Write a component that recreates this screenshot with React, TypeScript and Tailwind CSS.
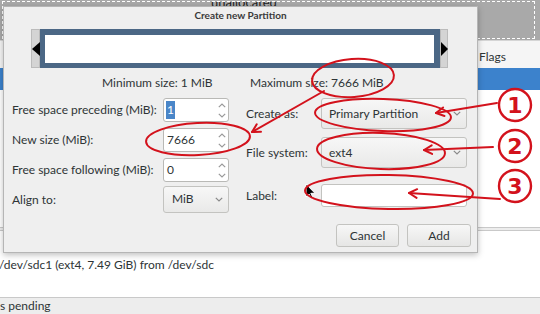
import React from "react";

const RED = "#d3121c";

function ChevronDown({ className = "" }: { className?: string }) {
  return (
    <svg width="8" height="5" viewBox="0 0 8 5" className={className}>
      <path d="M0.8 0.8 L4 4 L7.2 0.8" fill="none" stroke="currentColor" strokeWidth="1.2" />
    </svg>
  );
}
function ChevronUp({ className = "" }: { className?: string }) {
  return (
    <svg width="8" height="5" viewBox="0 0 8 5" className={className}>
      <path d="M0.8 4.2 L4 1 L7.2 4.2" fill="none" stroke="currentColor" strokeWidth="1.2" />
    </svg>
  );
}

function Spin({ value, selected }: { value: string; selected?: boolean }) {
  return (
    <div className="h-[24px] bg-white border border-[#b9b9b6] rounded-[3px] flex items-center pl-[2px] pr-[2px]">
      <div className="flex-1 text-[12px] text-[#2e3436] leading-none flex items-center h-full py-[2px]">
        {selected ? (
          <span className="bg-[#4a86c8] text-white h-full flex items-center px-[1px]">{value}</span>
        ) : (
          <span className="pl-[1px]">{value}</span>
        )}
      </div>
      <div className="flex flex-col items-center gap-[5px] text-[#9a9a9a]">
        <ChevronUp />
        <ChevronDown />
      </div>
    </div>
  );
}

function Combo({ value, h, pl = "pl-[8px]" }: { value: string; h: string; pl?: string }) {
  return (
    <div
      className={`${h} ${pl} pr-[5px] border border-[#c3c3c0] rounded-[3px] bg-gradient-to-b from-[#f7f7f7] to-[#e9e9e8] flex items-center text-[12px] text-[#2e3436] whitespace-nowrap`}
    >
      <span className="flex-1">{value}</span>
      <ChevronDown className="text-[#8a8a8a]" />
    </div>
  );
}

function Button({ label, w }: { label: string; w: string }) {
  return (
    <div
      className={`${w} h-[23px] border border-[#c3c3c0] rounded-[3px] bg-gradient-to-b from-[#f7f7f7] to-[#e6e6e5] flex items-center justify-center text-[12px] text-[#2e3436]`}
    >
      {label}
    </div>
  );
}

function Arrow({ x1, y1, x2, y2 }: { x1: number; y1: number; x2: number; y2: number }) {
  const a = Math.atan2(y1 - y2, x1 - x2);
  const len = 9;
  const s = 0.5;
  const p1 = [x2 + len * Math.cos(a + s), y2 + len * Math.sin(a + s)];
  const p2 = [x2 + len * Math.cos(a - s), y2 + len * Math.sin(a - s)];
  return (
    <g>
      <line x1={x1} y1={y1} x2={x2} y2={y2} />
      <polyline points={`${p1[0]},${p1[1]} ${x2},${y2} ${p2[0]},${p2[1]}`} />
    </g>
  );
}

function Circled({ cx, cy, n }: { cx: number; cy: number; n: string }) {
  return (
    <g>
      <circle cx={cx} cy={cy} r={16} strokeWidth={2.4} />
      <text
        x={cx}
        y={cy + 8}
        textAnchor="middle"
        fill={RED}
        stroke="none"
        fontFamily="'DejaVu Sans', sans-serif"
        fontWeight="bold"
        fontSize="22"
      >
        {n}
      </text>
    </g>
  );
}

export default function App() {
  return (
    <div className="relative w-[540px] h-[314px] overflow-hidden bg-white font-['Lato','Noto_Sans',sans-serif]">
      {/* Background GParted window */}
      <div className="flex flex-col w-full h-full">
        <div className="h-[40px] bg-[#a9a9a9] pt-[1px] pl-[2px] pr-[5px] pb-[1px]">
          <div className="h-full border-[1.5px] border-dashed border-white overflow-hidden">
            <div className="pl-[208px] -mt-[7px] text-[13px] leading-[14px] text-[#222]">unallocated</div>
          </div>
        </div>
        <div className="h-[28px] bg-[#f5f5f5] border-t border-[#d5d5d5] pl-[479px] pt-[8px] text-[12px] leading-[16px] text-[#2e3436]">
          Flags
        </div>
        <div className="h-[22px] bg-[#3c82cc]" />
        <div className="flex-1 bg-white" />
        <div className="h-[4px] bg-[#ededed] border-t border-b border-[#c9c9c9]" />
        <div className="h-[66px] bg-white pt-[28px] text-[12px] text-[#2e3436] leading-none whitespace-nowrap">
          <span className="-ml-[1px]">/dev/sdc1 (ext4, 7.49 GiB) from /dev/sdc</span>
        </div>
        <div className="h-[17px] bg-[#ededed] border-t border-[#c9c9c9] text-[12px] text-[#2e3436] leading-[16px]">
          s pending
        </div>
      </div>

      {/* Dialog window */}
      <div className="absolute left-[3px] top-[6px] w-[475px] h-[247px] bg-[#efefef] border border-[#b5b5b5] shadow-[0_2px_6px_rgba(0,0,0,0.25)] flex flex-col">
        <div className="h-[17px] flex items-center justify-center text-[10px] font-bold text-[#3a3a3a]">
          Create new Partition
        </div>
        <div className="mt-[5px] h-[39px] ml-[27px] mr-[29px] flex">
          <div className="w-[9px] bg-[#d4d4d4] border border-[#bbbbbb] flex items-center">
            <div className="w-0 h-0 border-t-[7px] border-b-[7px] border-r-[8px] border-t-transparent border-b-transparent border-r-black" />
          </div>
          <div className="flex-1 bg-white border-[#4b6785] border-t-[6px] border-l-[5px] border-r-[6px] border-b-[5px]" />
          <div className="w-[8px] bg-[#d4d4d4] border border-[#bbbbbb] flex items-center">
            <div className="w-0 h-0 border-t-[7px] border-b-[7px] border-l-[7px] border-t-transparent border-b-transparent border-l-black" />
          </div>
        </div>
        <div className="h-[30px] flex items-center pl-[98px] text-[12px] text-[#2e3436] whitespace-nowrap">
          <span className="w-[148px]">Minimum size: 1 MiB</span>
          <span>Maximum size: 7666 MiB</span>
        </div>
        <div className="flex pl-[8px] text-[12px] text-[#2e3436] whitespace-nowrap">
          <div className="grid grid-cols-[151px_66px] auto-rows-[24px] gap-y-[6px] items-center">
            <span>Free space preceding (MiB):</span>
            <Spin value="1" selected />
            <span>New size (MiB):</span>
            <Spin value="7666" />
            <span>Free space following (MiB):</span>
            <Spin value="0" />
            <span>Align to:</span>
            <div className="-mt-[2px]">
              <Combo value="MiB" h="h-[27px]" />
            </div>
          </div>
          <div className="ml-[17px] flex flex-col w-[221px]">
            <div className="flex items-center">
              <span className="w-[75px]">Create as:</span>
              <div className="flex-1">
                <Combo value="Primary Partition" h="h-[31px]" pl="pl-[7px]" />
              </div>
            </div>
            <div className="flex items-center mt-[8px]">
              <span className="w-[75px]">File system:</span>
              <div className="flex-1">
                <Combo value="ext4" h="h-[31px]" pl="pl-[7px]" />
              </div>
            </div>
            <div className="flex items-center mt-[16px]">
              <span className="w-[75px]">Label:</span>
              <div className="flex-1 h-[23px] bg-white border border-[#c3c3c0] rounded-[3px]" />
            </div>
          </div>
        </div>
        <div className="flex-1" />
        <div className="flex justify-end gap-[8px] pr-[6px] pb-[5px]">
          <Button label="Cancel" w="w-[63px]" />
          <Button label="Add" w="w-[64px]" />
        </div>
      </div>

      {/* Mouse cursor */}
      <svg className="absolute left-[305px] top-[183px]" width="11" height="17" viewBox="0 0 11 17">
        <path d="M1 1 L1 14 L4 11 L6.5 16 L8.3 15.2 L5.8 10.3 L10 10.3 Z" fill="black" stroke="white" strokeWidth="1" />
      </svg>

      {/* Red annotations */}
      <svg
        className="absolute left-0 top-0 pointer-events-none"
        width="540"
        height="314"
        viewBox="0 0 540 314"
        fill="none"
        stroke={RED}
        strokeWidth={2}
        strokeLinecap="round"
        strokeLinejoin="round"
      >
        <ellipse cx={353} cy={78} rx={41} ry={19} transform="rotate(-4 353 78)" />
        <Arrow x1={324} y1={91} x2={252} y2={132} />
        <ellipse cx={198} cy={139} rx={52} ry={16} transform="rotate(-3 198 139)" />
        <ellipse cx={383} cy={115} rx={68} ry={16} transform="rotate(2 383 115)" />
        <Arrow x1={497} y1={103} x2={436} y2={113} />
        <Circled cx={515} cy={105} n="1" />
        <ellipse cx={381} cy={151} rx={64} ry={18} transform="rotate(2 381 151)" />
        <Arrow x1={493} y1={147} x2={424} y2={150} />
        <Circled cx={515} cy={146} n="2" />
        <ellipse cx={389} cy={192} rx={84} ry={17} transform="rotate(1 389 192)" />
        <Arrow x1={500} y1={199} x2={409} y2={193} />
        <Circled cx={515} cy={186} n="3" />
      </svg>
    </div>
  );
}
